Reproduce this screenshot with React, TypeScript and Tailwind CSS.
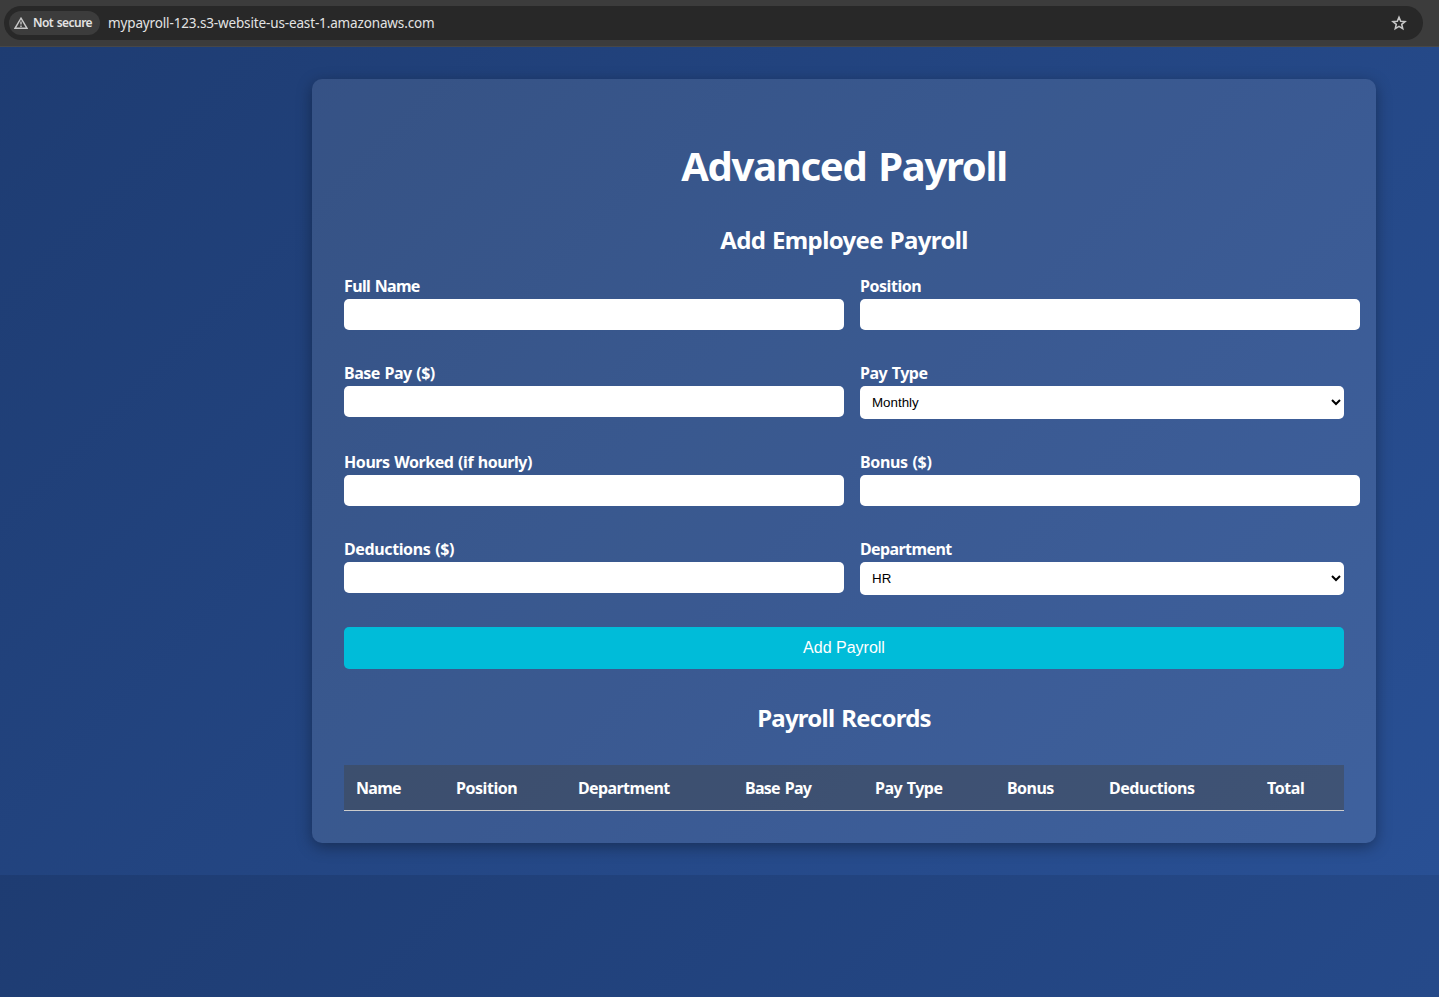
import type { ReactNode } from "react";

const columns = [
  { label: "Name", col: "w-[100px]", text: "tracking-[-0.73px]" },
  { label: "Position", col: "w-[122px]", text: "tracking-[-0.45px]" },
  { label: "Department", col: "w-[167px]", text: "tracking-[-0.6px]" },
  { label: "Base Pay", col: "w-[130px]", text: "tracking-[-0.75px] [word-spacing:1.5px]" },
  { label: "Pay Type", col: "w-[132px]", text: "tracking-[-0.5px] [word-spacing:1px]" },
  { label: "Bonus", col: "w-[102px]", text: "tracking-[-0.55px]" },
  { label: "Deductions", col: "w-[158px]", text: "tracking-[-0.46px]" },
  { label: "Total", col: "w-[89px]", text: "tracking-[-0.4px]" },
];

function Field({ label, tracking, children }: { label: string; tracking: string; children: ReactNode }) {
  return (
    <label className="block">
      <span className={`mb-0.5 block text-base leading-[22px] font-bold whitespace-nowrap ${tracking}`}>{label}</span>
      {children}
    </label>
  );
}

function TextInput() {
  return (
    <input
      type="text"
      className="block h-[31px] w-[500px] rounded-[5px] bg-white px-2 font-['Liberation_Sans',sans-serif] text-[13.333px] text-black outline-none"
    />
  );
}

function Select({ options }: { options: string[] }) {
  return (
    <span className="flex h-[33px] w-[484px] items-center rounded-[5px] bg-white pr-[3px]">
      <select className="h-full grow appearance-none pl-3 font-['Liberation_Sans',sans-serif] text-[13.333px] text-black outline-none">
        {options.map((option) => (
          <option key={option}>{option}</option>
        ))}
      </select>
      <svg width="10" height="8" viewBox="0 0 10 8" fill="none" stroke="#000" strokeWidth="2" className="mb-px">
        <path d="M1 2l4 4 4-4" />
      </svg>
    </span>
  );
}

function AddressBar() {
  return (
    <header className="h-[47px] border-b border-[#474747] bg-[#3c3c3c] pt-1.5 pr-4 pl-1 font-['Noto_Sans',sans-serif]">
      <div className="flex h-[34px] items-center rounded-full bg-[#282828] pr-4 pl-[5px]">
        <div className="flex h-6 w-[91px] items-center gap-[5px] rounded-full bg-[#3c3c3c] pl-[5px] text-[#e3e3e3]">
          <svg width="14" height="12" viewBox="0 0 14 12" fill="none" stroke="#c7c7c7" strokeWidth="1.4" className="shrink-0">
            <path d="M7 1.2L13 11.3H1z" />
            <path d="M7 4.4v3.2M7 8.6v1.3" />
          </svg>
          <span className="text-xs font-semibold tracking-[-0.55px] whitespace-nowrap [word-spacing:1px]">Not secure</span>
        </div>
        <span className="ml-2 grow text-[13.5px] tracking-[-0.14px] whitespace-nowrap text-[#e3e3e3]">
          mypayroll-123.s3-website-us-east-1.amazonaws.com
        </span>
        <svg width="16" height="16" viewBox="0 0 16 16" fill="none" stroke="#c7c7c7" strokeWidth="1.6">
          <path d="M8 2.2l1.7 4 4.3.37-3.27 2.83.98 4.2L8 11.4l-3.71 2.2.98-4.2L2 6.57l4.3-.37z" />
        </svg>
      </div>
    </header>
  );
}

export default function App() {
  return (
    <div className="h-[997px] w-[1439px] overflow-hidden font-['Noto_Sans',sans-serif] text-white">
      <AddressBar />
      <main className="h-[950px] w-[1688px] bg-[linear-gradient(135deg,#1e3c72,#2a5298)] bg-[length:1688px_828px] bg-repeat px-[312px] pt-8">
        <section className="h-[764px] w-[1064px] rounded-[10px] bg-white/10 px-8 pt-[60px] shadow-[0_4px_15px_rgba(0,0,0,0.35)]">
          <h1 className="text-center text-[40px] leading-[54px] font-bold tracking-[-1.3px] [word-spacing:2.8px]">Advanced Payroll</h1>
          <h2 className="mt-[31px] text-center text-2xl leading-8 font-bold tracking-[-0.65px] [word-spacing:1.3px]">Add Employee Payroll</h2>

          <form className="mt-[19px]">
            <div className="grid grid-cols-[500px_484px] gap-x-4 gap-y-8">
              <Field label="Full Name" tracking="tracking-[-0.65px] [word-spacing:1px]"><TextInput /></Field>
              <Field label="Position" tracking="tracking-[-0.45px]"><TextInput /></Field>
              <Field label="Base Pay ($)" tracking="tracking-[-0.5px] [word-spacing:1px]"><TextInput /></Field>
              <Field label="Pay Type" tracking="tracking-[-0.5px] [word-spacing:1px]"><Select options={["Monthly", "Hourly"]} /></Field>
              <Field label="Hours Worked (if hourly)" tracking="tracking-[-0.43px] [word-spacing:0.8px]"><TextInput /></Field>
              <Field label="Bonus ($)" tracking="tracking-[-0.35px] [word-spacing:1px]"><TextInput /></Field>
              <Field label="Deductions ($)" tracking="tracking-[-0.38px] [word-spacing:1px]"><TextInput /></Field>
              <Field label="Department" tracking="tracking-[-0.6px]"><Select options={["HR", "Finance", "IT"]} /></Field>
            </div>
            <button
              type="button"
              className="mt-8 block h-[42px] w-full rounded-[5px] bg-[#00bcd9] font-['Liberation_Sans',sans-serif] text-base text-white"
            >
              Add Payroll
            </button>
          </form>

          <h2 className="mt-[33px] text-center text-2xl leading-8 font-bold tracking-[-0.75px] [word-spacing:1.3px]">Payroll Records</h2>
          <table className="mt-[31px] w-full table-fixed border-separate border-spacing-0">
            <thead className="bg-[rgba(63,69,77,0.5)]">
              <tr>
                {columns.map(({ label, col, text }) => (
                  <th key={label} className={`h-[46px] border-b border-[#ccc] p-0 pt-px pl-3 text-left text-base font-bold whitespace-nowrap ${col} ${text}`}>
                    {label}
                  </th>
                ))}
              </tr>
            </thead>
          </table>
        </section>
      </main>
    </div>
  );
}
